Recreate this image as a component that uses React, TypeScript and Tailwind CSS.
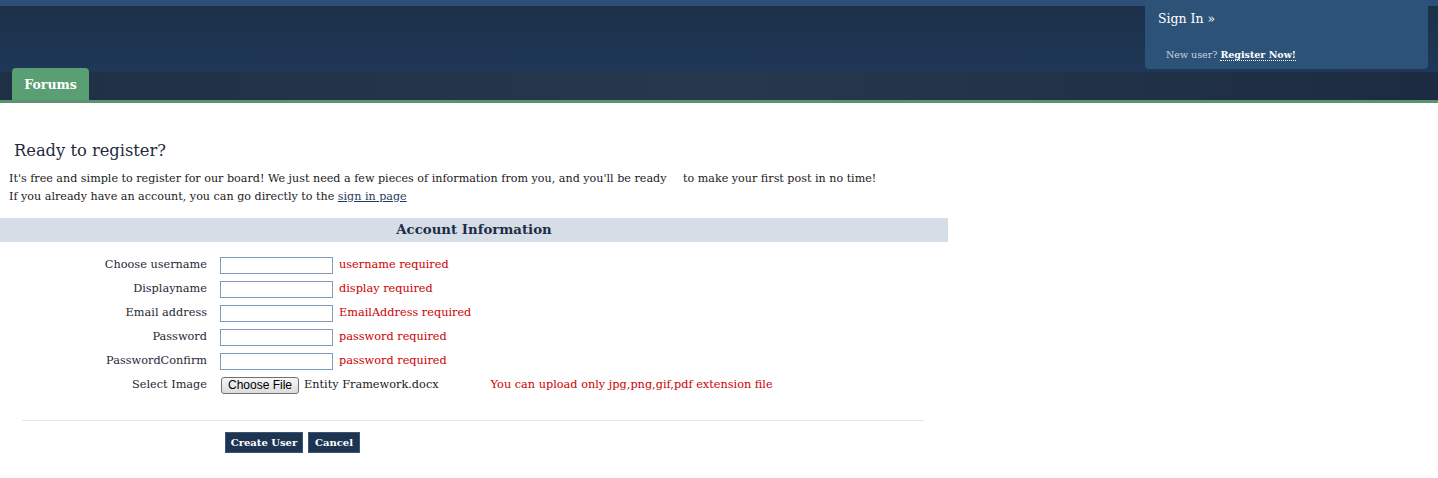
import React from "react";

const rows = [
  { label: "Choose username", err: "username required" },
  { label: "Displayname", err: "display required" },
  { label: "Email address", err: "EmailAddress required" },
  { label: "Password", err: "password required" },
  { label: "PasswordConfirm", err: "password required" },
];

export default function App() {
  return (
    <div className="w-[1438px] h-[478px] bg-white overflow-hidden font-['DejaVu_Serif',serif] text-[#1d2a3a]">
      <header className="relative">
        <div className="h-[6px] bg-[#2c5077]" />
        <div className="h-[66px] bg-gradient-to-b from-[#1c3048] to-[#1f3858]" />
        <nav className="h-[28px] bg-gradient-to-r from-[#1f2f45] via-[#27384e] to-[#1c2b41] flex items-end pl-[12px]">
          <div className="h-[32px] -mt-[4px] w-[77px] rounded-t-[4px] bg-[#5a9e74] flex items-center justify-center pt-[2px] text-white font-bold text-[12.5px]">
            Forums
          </div>
        </nav>
        <div className="h-[3px] bg-[#5a9272]" />
        <div className="absolute top-0 right-[10px] w-[283px] h-[69px] bg-[#2d5278] rounded-b-[4px] pl-[13px]">
          <div className="text-white text-[12.5px] pt-[11px] leading-[16px]">Sign In »</div>
          <div className="text-[9.5px] pt-[21px] pl-[8px] text-[#c9d4e1] leading-[14px]">
            New user?{" "}
            <span className="text-white font-bold border-b border-dotted border-white">Register Now!</span>
          </div>
        </div>
      </header>

      <main>
        <h1 className="text-[16.3px] leading-[22px] pl-[14px] pt-[37px] text-[#1f2b3b]">Ready to register?</h1>
        <div className="text-[11.15px] leading-[18px] pl-[9px] pt-[8px] text-[#1a1a1a]">
          <p>
            It's free and simple to register for our board! We just need a few pieces of information from you, and you'll be ready
            <span className="inline-block w-[13px]" /> to make your first post in no time!
          </p>
          <p>
            If you already have an account, you can go directly to the{" "}
            <a className="underline text-[#1f3a5f]" href="#">sign in page</a>
          </p>
        </div>

        <div className="mt-[12px] w-[948px] h-[24px] bg-[#d5dde6] flex items-center justify-center font-bold text-[13.3px] text-[#1c2d45]">
          Account Information
        </div>

        <div className="pt-[11px] text-[11.3px]">
          {rows.map((r) => (
            <div key={r.label} className="flex items-center h-[24px]">
              <div className="w-[207px] text-right text-[#1f2733]">{r.label}</div>
              <input className="ml-[13px] w-[113px] h-[17px] border border-[#7f9db9] bg-white outline-none" />
              <span className="ml-[6px] text-[#cc0000]">{r.err}</span>
            </div>
          ))}
          <div className="flex items-center h-[24px]">
            <div className="w-[207px] text-right text-[#1f2733]">Select Image</div>
            <button className="ml-[14px] w-[78px] h-[17px] border border-[#707070] rounded-[3px] bg-gradient-to-b from-[#f6f6f6] to-[#dcdcdc] text-[12px] font-['Liberation_Sans',sans-serif] text-black leading-none flex items-center justify-center">
              Choose File
            </button>
            <span className="ml-[5px] text-[#1a1a1a]">Entity Framework.docx</span>
            <span className="ml-[52px] text-[#cc0000]">You can upload only jpg,png,gif,pdf extension file</span>
          </div>
        </div>

        <div className="mt-[23px] ml-[22px] w-[902px] h-px bg-[#e6e6e6]" />

        <div className="flex gap-[5px] pl-[225px] pt-[11px]">
          <button className="h-[21px] w-[78px] bg-[#1e3552] border border-[#3a5578] text-white font-bold text-[10px]">Create User</button>
          <button className="h-[21px] w-[52px] bg-[#1e3552] border border-[#3a5578] text-white font-bold text-[10px]">Cancel</button>
        </div>
      </main>
    </div>
  );
}
